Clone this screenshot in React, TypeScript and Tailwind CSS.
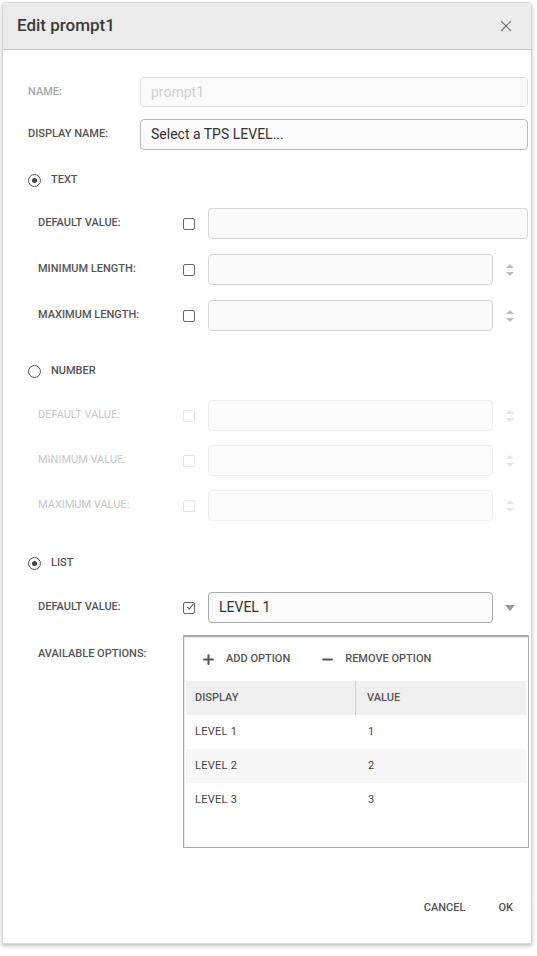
import { X, Plus, Minus } from 'lucide-react';

const font = { fontFamily: 'Roboto, "Liberation Sans", sans-serif' };

function Radio({ checked, label }: { checked: boolean; label: string }) {
    return (
        <div className="flex items-center h-[18px] pl-[28px]">
            <div className="w-[13px] h-[13px] rounded-full border-[1.5px] border-[#555] flex items-center justify-center">
                {checked && <div className="w-[5px] h-[5px] rounded-full bg-[#444]" />}
            </div>
            <span className="ml-[10px] text-[11px] font-medium text-[#555]">{label}</span>
        </div>
    );
}

function Checkbox({ checked, disabled }: { checked?: boolean; disabled?: boolean }) {
    return (
        <div className={`w-[12px] h-[12px] rounded-[2px] border-[1.5px] flex items-center justify-center ${disabled ? 'border-[#e4e4e4]' : 'border-[#666]'}`}>
            {checked && (
                <svg viewBox="0 0 12 12" className="w-[10px] h-[10px] -mt-[2px] ml-[2px]">
                    <path d="M2 6 L5 9 L11 1.5" fill="none" stroke="#555" strokeWidth="1.6" />
                </svg>
            )}
        </div>
    );
}

function Spinner({ disabled }: { disabled?: boolean }) {
    const c = disabled ? '#e6e6e6' : '#bdbdbd';
    return (
        <svg viewBox="0 0 10 16" className="w-[10px] h-[16px]">
            <path d="M1 6 L5 2 L9 6 Z" fill={c} />
            <path d="M1 10 L5 14 L9 10 Z" fill={c} />
        </svg>
    );
}

function SubRow({ label, disabled, spinner, top }: { label: string; disabled?: boolean; spinner?: boolean; top: string }) {
    return (
        <div className={`flex items-center h-[31px] pl-[38px] ${top}`}>
            <span className={`w-[145px] text-[11px] ${disabled ? 'text-[#c8c8c8] font-normal' : 'text-[#555] font-medium'}`}>{label}</span>
            <Checkbox disabled={disabled} />
            <div className={`ml-[13px] h-full rounded-[4px] border ${disabled ? 'border-[#efefef] bg-[#fcfcfc]' : 'border-[#d6d6d6] bg-[#f9f9f9]'} ${spinner ? 'w-[285px]' : 'w-[320px]'}`} />
            {spinner && (
                <div className="ml-[12px]">
                    <Spinner disabled={disabled} />
                </div>
            )}
        </div>
    );
}

const rows = [
    { display: 'LEVEL 1', value: '1' },
    { display: 'LEVEL 2', value: '2' },
    { display: 'LEVEL 3', value: '3' },
];

export default function App() {
    return (
        <div className="w-[537px] h-[956px] bg-white pt-[2px] pl-[2px]" style={font}>
            <div className="w-[530px] h-[942px] bg-white border border-[#d8d8d8] rounded-t-[4px] shadow-[0_2px_4px_rgba(0,0,0,0.25)] flex flex-col">
                {/* Header */}
                <div className="h-[47px] bg-[#ebebeb] border-b border-[#c4c4c4] rounded-t-[4px] flex items-center justify-between pl-[14px] pr-[16px]">
                    <span className="text-[17px] font-medium text-[#3a3a3a]">Edit prompt1</span>
                    <X className="w-[18px] h-[18px] text-[#777]" strokeWidth={1.6} />
                </div>

                {/* Name rows */}
                <div className="flex items-center h-[30px] mt-[27px] pl-[25px]">
                    <span className="w-[112px] text-[11px] text-[#a8a8a8] font-medium">NAME:</span>
                    <div className="w-[388px] h-full rounded-[4px] border border-[#e0e0e0] bg-[#fafafa] flex items-center px-[10px] text-[14px] text-[#cfcfcf]">prompt1</div>
                </div>
                <div className="flex items-center h-[31px] mt-[12px] pl-[25px]">
                    <span className="w-[112px] text-[11px] text-[#555] font-medium">DISPLAY NAME:</span>
                    <div className="w-[388px] h-full rounded-[4px] border border-[#b8b8b8] bg-[#fafafa] flex items-center px-[10px] text-[14px] text-[#333]">Select a TPS LEVEL...</div>
                </div>

                {/* Text */}
                <div className="mt-[21px] -ml-[3px]"><Radio checked label="TEXT" /></div>
                <div className="-ml-[3px]">
                    <SubRow label="DEFAULT VALUE:" top="mt-[19px]" />
                    <SubRow label="MINIMUM LENGTH:" spinner top="mt-[15px]" />
                    <SubRow label="MAXIMUM LENGTH:" spinner top="mt-[15px]" />
                </div>

                {/* Number */}
                <div className="mt-[31px] -ml-[3px]"><Radio checked={false} label="NUMBER" /></div>
                <div className="-ml-[3px]">
                    <SubRow label="DEFAULT VALUE:" disabled spinner top="mt-[20px]" />
                    <SubRow label="MINIMUM VALUE:" disabled spinner top="mt-[14px]" />
                    <SubRow label="MAXIMUM VALUE:" disabled spinner top="mt-[14px]" />
                </div>

                {/* List */}
                <div className="mt-[33px] -ml-[3px]"><Radio checked label="LIST" /></div>
                <div className="-ml-[3px] flex items-center h-[31px] mt-[20px] pl-[38px]">
                    <span className="w-[145px] text-[11px] font-medium text-[#555]">DEFAULT VALUE:</span>
                    <Checkbox checked />
                    <div className="ml-[13px] w-[285px] h-full rounded-[4px] border border-[#aaa] bg-[#fafafa] flex items-center px-[10px] text-[14px] text-[#333]">LEVEL 1</div>
                    <svg viewBox="0 0 10 6" className="ml-[12px] w-[10px] h-[6px]">
                        <path d="M0 0 L10 0 L5 6 Z" fill="#999" />
                    </svg>
                </div>

                <div className="-ml-[3px] flex mt-[12px] pl-[38px]">
                    <span className="w-[145px] pt-[11px] text-[11px] font-medium text-[#555]">AVAILABLE OPTIONS:</span>
                    <div className="w-[346px] h-[213px] border border-[#aaa] border-t-2 shadow-[inset_1px_1px_1px_rgba(0,0,0,0.08)] flex flex-col">
                        <div className="h-[44px] flex items-center pl-[17px] text-[11px] font-medium text-[#555]">
                            <Plus className="w-[15px] h-[15px] text-[#555]" strokeWidth={3.2} />
                            <span className="ml-[10px]">ADD OPTION</span>
                            <Minus className="ml-[30px] w-[15px] h-[15px] text-[#555]" strokeWidth={3.2} />
                            <span className="ml-[10px]">REMOVE OPTION</span>
                        </div>
                        <div className="mr-[2px] ml-[2px]">
                            <div className="h-[34px] bg-[#f0f0f0] flex items-center text-[11px] font-medium text-[#555]">
                                <div className="w-[170px] h-full flex items-center pl-[9px] border-r border-[#cfcfcf]">DISPLAY</div>
                                <div className="pl-[11px]">VALUE</div>
                            </div>
                            {rows.map((r, i) => (
                                <div key={r.display} className={`h-[34px] flex items-center text-[11px] text-[#444] tracking-wide ${i === 1 ? 'bg-[#f7f7f7]' : 'bg-white'}`}>
                                    <div className="w-[170px] pl-[9px]">{r.display}</div>
                                    <div className="pl-[12px]">{r.value}</div>
                                </div>
                            ))}
                        </div>
                    </div>
                </div>

                {/* Footer */}
                <div className="mt-[52px] flex items-center justify-end pr-[18px] text-[11px] font-medium text-[#555]">
                    <span>CANCEL</span>
                    <span className="ml-[33px]">OK</span>
                </div>
            </div>
        </div>
    );
}
